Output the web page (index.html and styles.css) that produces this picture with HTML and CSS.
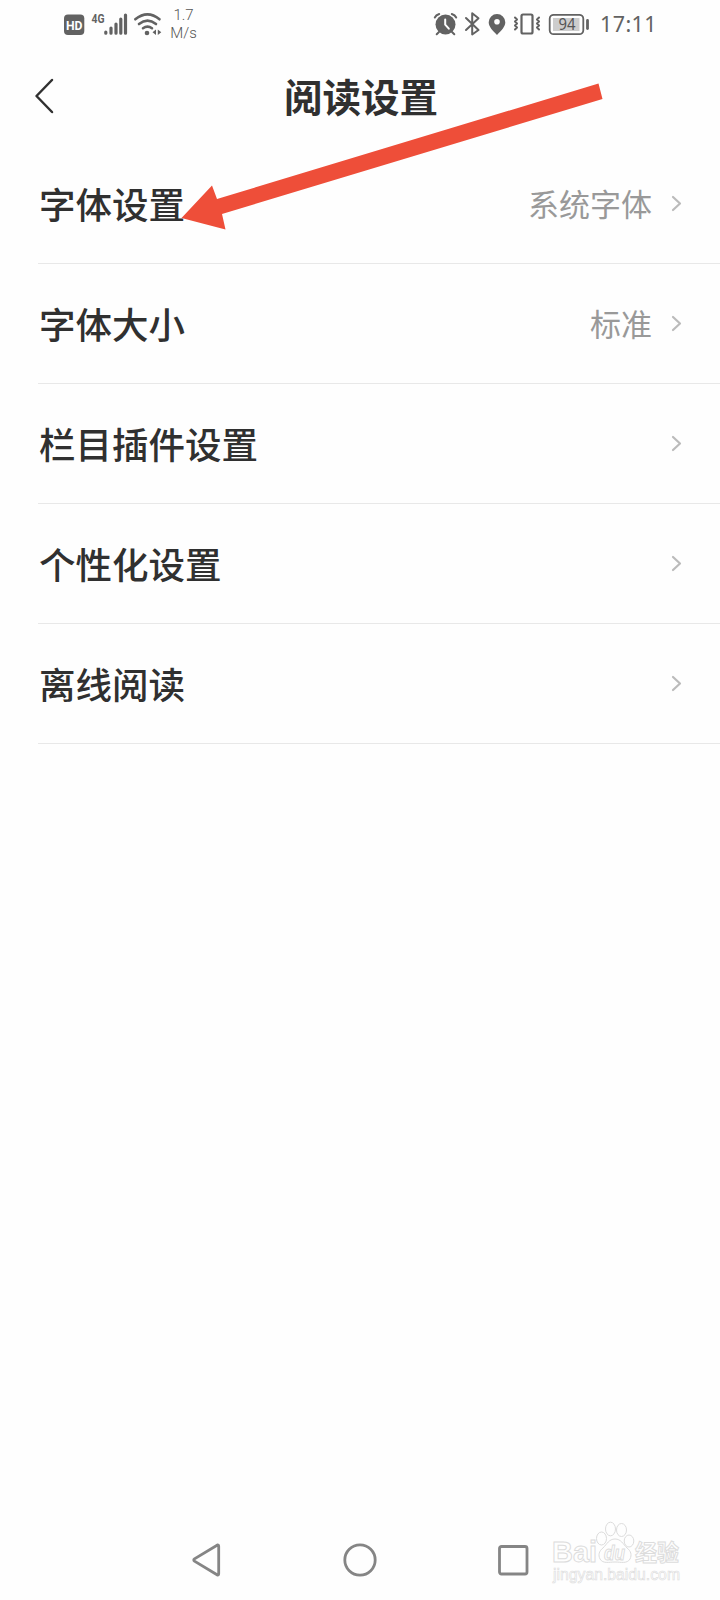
FILE: index.html
```html
<!DOCTYPE html>
<html lang="zh-CN">
<head>
<meta charset="utf-8">
<title>阅读设置</title>
<link rel="stylesheet" href="styles.css">
</head>
<body>
<div class="screen">
  <div class="status">
    <div class="status-left">
      <svg width="100" height="50" viewBox="64 0 100 50" fill="#626262">
        <rect x="64" y="14.5" width="20.3" height="20.5" rx="4"/>
        <text class="hd" x="66" y="30" textLength="16.5" lengthAdjust="spacingAndGlyphs">HD</text>
        <text class="net" x="91.5" y="23" textLength="13" lengthAdjust="spacingAndGlyphs">4G</text>
        <g stroke="#626262" stroke-width="3.2" stroke-linecap="round">
          <path d="M105.8 32v1.2M111 28v5.2M116 24v9.2M120.800 19v14.2M125.500 15v18.200"/>
        </g>
        <g fill="none" stroke="#626262" stroke-width="2.6" stroke-linecap="round">
          <path d="M135.300 19.300Q147.500 9.500 159.500 19.300M139 24Q147.500 17.300 156 24M143 28.200Q147.500 25 152 28.200"/>
        </g>
        <circle cx="147" cy="33" r="2.300"/>
        <path d="M156 29.500v5.500l-3.500-2.700zM157.800 29.500v5.500l3.500-2.700z"/>
      </svg>
      <div class="speed"><span>1.7</span><span>M/s</span></div>
    </div>
    <div class="status-right">
      <svg width="160" height="50" viewBox="432 0 160 50" fill="none" stroke="#626262" stroke-linecap="round" stroke-linejoin="round">
        <circle cx="445.500" cy="24.500" r="10" fill="#626262" stroke="none"/>
        <path d="M434.800 17.500Q436 15 439.200 14M456.200 17.500Q455 15 451.800 14M439 32l-2.300 2.200M452 32l2.300 2.200" stroke-width="2"/>
        <path d="M445.200 19.500v5.200l3.600 4" stroke="#fff" stroke-width="2"/>
        <path d="M466 18l12.500 12-6.300 4.500v-21.300l6.300 5L466 30" stroke-width="2"/>
        <path d="M497 14a8.300 8.300 0 0 0-8.300 8.300c0 4.500 4 8.300 8.300 12.700 4.300-4.400 8.300-8.200 8.300-12.700A8.300 8.300 0 0 0 497 14zM497 19a2.800 2.800 0 1 1 0 5.600 2.800 2.800 0 0 1 0-5.600z" fill="#626262" fill-rule="evenodd" stroke="none"/>
        <rect x="521.500" y="14.500" width="11" height="19" rx="1.500" stroke-width="2.200"/>
        <path d="M515 17.500l2 2-2 2 2 2-2 2 2 2-2 2M539 17.500l-2 2 2 2-2 2 2 2-2 2 2 2" stroke-width="2"/>
        <rect x="549.700" y="14.800" width="33.600" height="19.400" rx="4" stroke-width="1.800"/>
        <rect x="553" y="18" width="26.500" height="13" fill="#cdcdcd" stroke="none"/>
        <path d="M587.500 20.500v8" stroke-width="2.800"/>
        <text class="battery" x="558.500" y="29.500" textLength="17" lengthAdjust="spacingAndGlyphs">94</text>
      </svg>
      <span class="clock">17:11</span>
    </div>
  </div>
  <header class="header">
    <svg class="back" width="20" height="36" viewBox="0 0 20 36"><path d="M18 2L2.500 18 18 34"/></svg>
    <h1 class="title">阅读设置</h1>
  </header>
  <main class="list">
    <div class="row"><span class="label">字体设置</span><span class="value">系统字体</span><svg class="chevron" width="12" height="18" viewBox="0 0 12 18"><path d="M3 2l7 6.500L3 15"/></svg></div>
    <div class="row"><span class="label">字体大小</span><span class="value">标准</span><svg class="chevron" width="12" height="18" viewBox="0 0 12 18"><path d="M3 2l7 6.500L3 15"/></svg></div>
    <div class="row"><span class="label">栏目插件设置</span><svg class="chevron" width="12" height="18" viewBox="0 0 12 18"><path d="M3 2l7 6.500L3 15"/></svg></div>
    <div class="row"><span class="label">个性化设置</span><svg class="chevron" width="12" height="18" viewBox="0 0 12 18"><path d="M3 2l7 6.500L3 15"/></svg></div>
    <div class="row"><span class="label">离线阅读</span><svg class="chevron" width="12" height="18" viewBox="0 0 12 18"><path d="M3 2l7 6.500L3 15"/></svg></div>
  </main>
  <nav class="nav">
    <svg width="30" height="36" viewBox="0 0 30 36"><path d="M25.500 3L2.500 16.800q-1.500 1.200 0 2.400L25.500 33q1.200 0 1.200-1.500V4.500q0-1.500-1.200-1.500z"/></svg>
    <svg width="36" height="36" viewBox="0 0 36 36"><circle cx="18" cy="18" r="15.200"/></svg>
    <svg width="32" height="36" viewBox="0 0 32 36"><rect x="2.500" y="4.500" width="27.500" height="27.500" rx="2"/></svg>
  </nav>
  <svg class="arrow" width="424" height="150" viewBox="180 82 424 150"><path d="M181.500 218L212 185.500l5 13.500L598.500 83.500 602.500 99 222 214l3.500 15.500z"/></svg>
  <svg class="watermark" width="140" height="75" viewBox="548 1517 140 75">
    <ellipse cx="601.500" cy="1538.500" rx="5" ry="6.500"/>
    <ellipse cx="610.500" cy="1529" rx="5" ry="6.800"/>
    <ellipse cx="621.500" cy="1530" rx="5" ry="6.500"/>
    <ellipse cx="629" cy="1541" rx="4.800" ry="6"/>
    <path d="M615 1539c-6 0-8 5-12 9-4 3-5 7-3 11 3 5 9 3 15 3s12 2 15-3c2-4 1-8-3-11-4-4-6-9-12-9z"/>
    <text class="brand" x="552" y="1562" textLength="45" lengthAdjust="spacingAndGlyphs">Bai</text>
    <text class="paw" x="604" y="1560" textLength="21" lengthAdjust="spacingAndGlyphs">du</text>
    <text class="brand-cn" x="635" y="1560.500" textLength="44" lengthAdjust="spacingAndGlyphs">经验</text>
    <text class="url" x="553" y="1579.500" textLength="127" lengthAdjust="spacingAndGlyphs">jingyan.baidu.com</text>
  </svg>
</div>
</body>
</html>
```
FILE: styles.css
```css
* { box-sizing: border-box; }
body {
  margin: 0;
  background: #fefefe;
  color: #303030;
  font-family: KaiTi, STKaiti, "Noto Sans CJK SC", sans-serif;
}
.screen {
  position: relative;
  display: flex;
  flex-direction: column;
  width: 720px;
  height: 1600px;
  overflow: hidden;
}
.status {
  display: flex;
  justify-content: space-between;
  height: 50px;
  padding: 0 64px;
  font-family: Roboto, sans-serif;
  color: #626262;
}
.status-left, .status-right { display: flex; }
.status-left { gap: 6px; }
.speed {
  display: flex;
  flex-direction: column;
  align-items: center;
  width: 27px;
  padding-top: 6px;
  font-size: 15px;
  line-height: 18px;
  font-weight: 300;
  color: #555;
}
.hd { font: 700 12.5px Roboto, sans-serif; fill: #fff; }
.net { font: 700 13.5px Roboto, sans-serif; }
.battery { font: 400 16px "Noto Sans", sans-serif; fill: #555; stroke: none; }
.clock {
  width: 56px;
  margin-left: 8px;
  font: 400 21.5px/48px "Noto Sans", sans-serif;
  letter-spacing: 0.4px;
  white-space: nowrap;
}
.header {
  display: grid;
  grid-template-columns: 34px 20px 1fr 52px;
  align-items: center;
  height: 94px;
}
.back {
  grid-column: 2;
  margin-top: -2px;
  fill: none;
  stroke: #303030;
  stroke-width: 2.5;
  stroke-linecap: round;
  stroke-linejoin: round;
}
.title {
  margin: 0 0 4px;
  font-size: 38.5px;
  line-height: 50px;
  font-weight: 700;
  text-align: center;
}
.list { flex: 1; padding-left: 38px; }
.row {
  display: flex;
  align-items: center;
  height: 120px;
  padding-right: 38px;
  border-bottom: 1px solid #e8e8e8;
}
.label {
  flex: 1;
  padding-left: 1px;
  font-size: 36.5px;
  line-height: 50px;
  font-weight: 500;
}
.value { font-size: 31px; line-height: 50px; margin: 0 18px 2px 0; color: #999; }
.chevron {
  fill: none;
  stroke: #bbb;
  stroke-width: 2.2;
  stroke-linecap: round;
  stroke-linejoin: round;
}
.nav {
  display: flex;
  align-items: center;
  justify-content: space-between;
  height: 80px;
  padding: 0 191px 0 192px;
  fill: none;
  stroke: #858585;
  stroke-width: 2.8;
}
.arrow { position: absolute; left: 180px; top: 82px; fill: #ee4e39; }
.watermark {
  position: absolute;
  left: 548px;
  top: 1517px;
  fill: #fefefe;
  stroke: #dcdcdc;
  stroke-width: 1;
}
.brand { font: 700 30px "Liberation Sans", sans-serif; }
.paw { font: italic 700 20px "Liberation Sans", sans-serif; }
.brand-cn { font: 700 23px "Noto Sans CJK SC", sans-serif; }
.url { font: 400 16px "Liberation Sans", sans-serif; stroke-width: 0.6; }
```
